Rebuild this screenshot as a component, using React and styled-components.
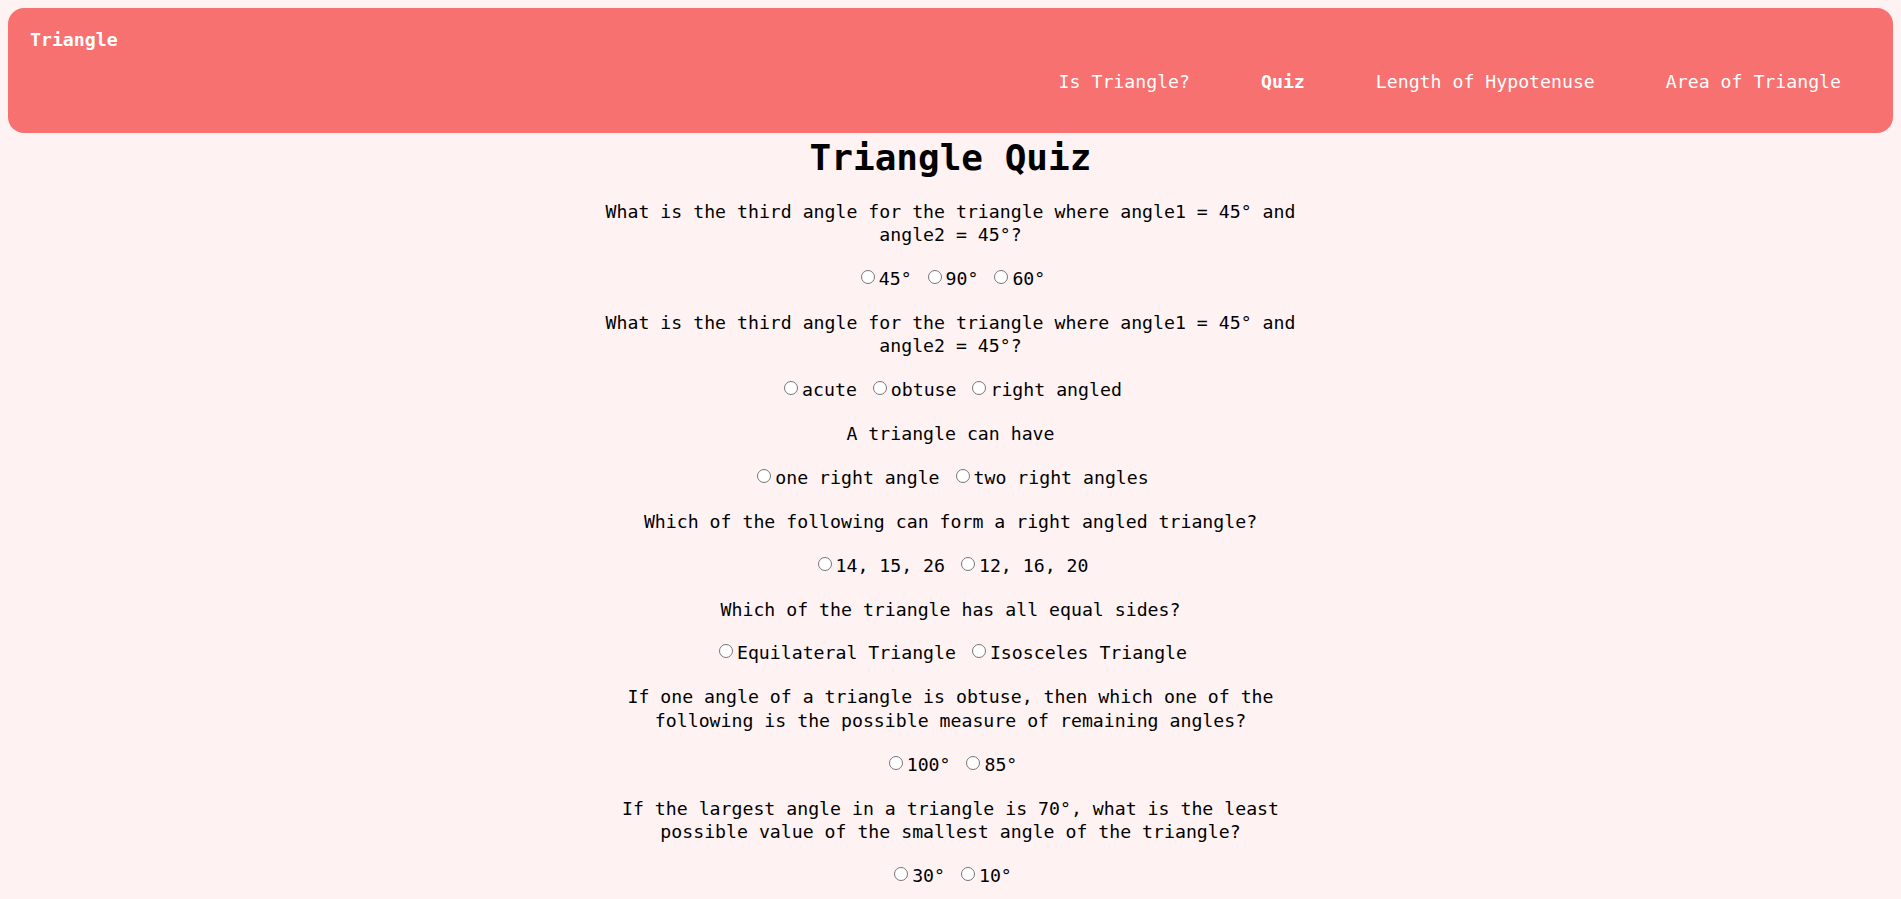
import React from 'react';
import styled, { createGlobalStyle } from 'styled-components';

const GlobalStyle = createGlobalStyle`
	body {
		margin: 8px;
		background: #fef2f2;
		color: #000;
		font-family: "DejaVu Sans Mono", "Liberation Mono", monospace;
	}
`;

const Header = styled.header`
	box-sizing: border-box;
	height: 125px;
	padding: 20px 52px 0 22px;
	background: #f87171;
	border-radius: 16px;
	color: #fff;
	font-size: 18.2px;
	line-height: 23.4px;
	display: flex;
	flex-direction: column;
`;

const Brand = styled.div`
	font-weight: bold;
`;

const Nav = styled.nav`
	margin-top: 19px;
	display: flex;
	justify-content: flex-end;
	gap: 71px;
`;

const NavLink = styled.a`
	color: #fff;
	text-decoration: none;
	font-weight: ${(p) => (p.$active ? 'bold' : 'normal')};
	cursor: pointer;
`;

const Main = styled.main`
	display: flex;
	flex-direction: column;
	align-items: center;
	text-align: center;
	font-size: 18.2px;
	line-height: 23.4px;
`;

const Title = styled.h1`
	margin: 2px 0 18.5px;
	font-size: 36px;
	line-height: 46px;
	font-weight: bold;
`;

const Quiz = styled.form`
	width: 720px;
	display: flex;
	flex-direction: column;
	gap: 20.5px;
`;

const Question = styled.p`
	margin: 0;
`;

const Options = styled.div`
	height: 23.4px;
	white-space: pre-wrap;
`;

const Option = styled.label`
	cursor: pointer;
`;

const Radio = styled.input.attrs({ type: 'radio' })`
	appearance: none;
	box-sizing: border-box;
	display: inline-block;
	width: 14px;
	height: 14px;
	margin: 0 4px 0 5px;
	vertical-align: 1px;
	border: 1px solid #767676;
	border-radius: 50%;
	background: #fff;
	cursor: pointer;

	&:checked {
		border-color: #0075ff;
		box-shadow: inset 0 0 0 3px #fff;
		background: #0075ff;
	}
`;

const questions = [
	{
		text: 'What is the third angle for the triangle where angle1 = 45° and angle2 = 45°?',
		options: ['45°', '90°', '60°'],
	},
	{
		text: 'What is the third angle for the triangle where angle1 = 45° and angle2 = 45°?',
		options: ['acute', 'obtuse', 'right angled'],
	},
	{ text: 'A triangle can have', options: ['one right angle', 'two right angles'] },
	{
		text: 'Which of the following can form a right angled triangle?',
		options: ['14, 15, 26', '12, 16, 20'],
	},
	{
		text: 'Which of the triangle has all equal sides?',
		options: ['Equilateral Triangle', 'Isosceles Triangle'],
	},
	{
		text: 'If one angle of a triangle is obtuse, then which one of the following is the possible measure of remaining angles?',
		options: ['100°', '85°'],
	},
	{
		text: 'If the largest angle in a triangle is 70°, what is the least possible value of the smallest angle of the triangle?',
		options: ['30°', '10°'],
	},
];

export default function App() {
	return (
		<>
			<GlobalStyle />
			<Header>
				<Brand>Triangle</Brand>
				<Nav>
					<NavLink>Is Triangle?</NavLink>
					<NavLink $active>Quiz</NavLink>
					<NavLink>Length of Hypotenuse</NavLink>
					<NavLink>Area of Triangle</NavLink>
				</Nav>
			</Header>
			<Main>
				<Title>Triangle Quiz</Title>
				<Quiz>
					{questions.map((q, i) => (
						<React.Fragment key={i}>
							<Question>{q.text}</Question>
							<Options>
								{q.options.map((o, j) => (
									<React.Fragment key={o}>
										{j > 0 && ' '}
										<Option>
											<Radio name={`q${i}`} value={o} />
											{o}
										</Option>
									</React.Fragment>
								))}
							</Options>
						</React.Fragment>
					))}
				</Quiz>
			</Main>
		</>
	);
}
